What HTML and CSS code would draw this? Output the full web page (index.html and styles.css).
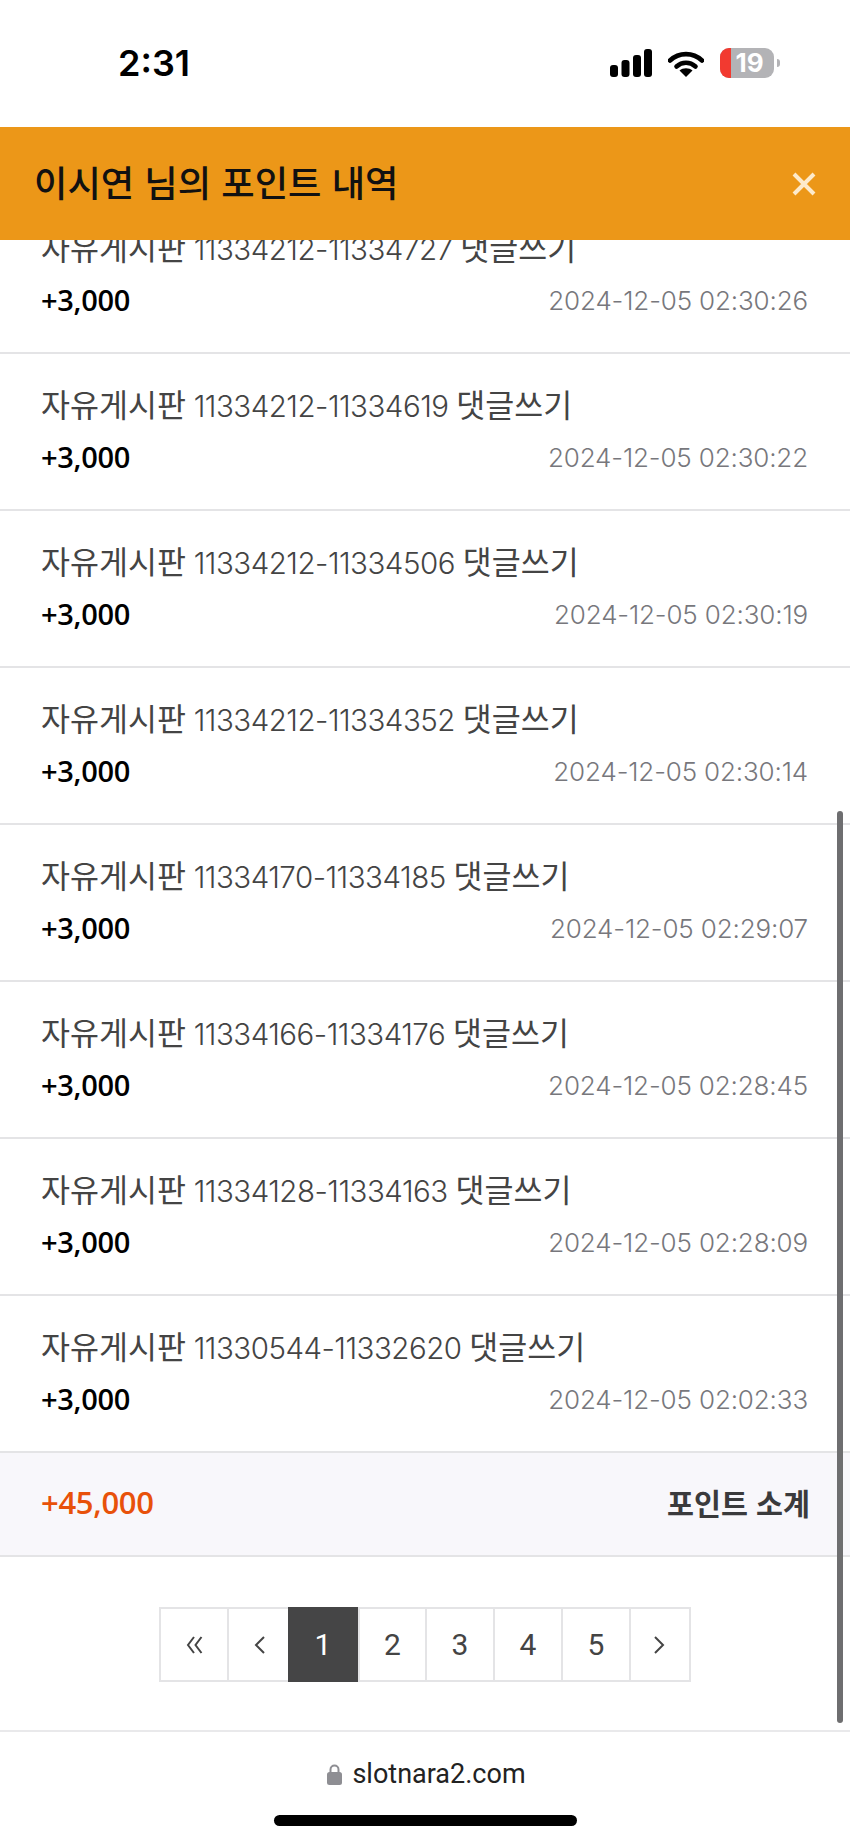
FILE: index.html
```html
<!DOCTYPE html>
<html lang="ko">

<head>
  <meta charset="UTF-8">
  <meta name="viewport" content="width=device-width, initial-scale=1.0">
  <title>포인트 내역</title>
  <link rel="stylesheet" href="styles.css">
</head>

<body>
  <div class="status-bar">
    <div class="time">2:31</div>
    <div class="status-icons">
      <svg class="signal" width="42" height="28" viewBox="0 0 42 28">
        <rect x="0" y="16" width="8" height="12" rx="3"/>
        <rect x="11.5" y="11" width="8" height="17" rx="3"/>
        <rect x="23" y="6" width="8" height="22" rx="3"/>
        <rect x="34" y="0" width="8" height="28" rx="3"/>
      </svg>
      <svg class="wifi" width="36" height="27" viewBox="0 0 36 27">
        <path d="M2 10.5C11 2 25 2 34 10.5" fill="none" stroke="#000" stroke-width="4.6" stroke-linecap="round"/>
        <path d="M8.5 16.5C14 11.5 22 11.5 27.5 16.5" fill="none" stroke="#000" stroke-width="4.6" stroke-linecap="round"/>
        <path d="M18 27L11.5 20.5C15 17.5 21 17.5 24.5 20.5Z"/>
      </svg>
      <div class="battery">
        <div class="battery-body"><span class="battery-low"></span><span class="battery-num">19</span></div>
        <span class="battery-nub"></span>
      </div>
    </div>
  </div>

  <div class="title-bar">
    <h1 class="title">이시연 님의 포인트 내역</h1>
    <svg class="close" width="26" height="26" viewBox="0 0 26 26">
      <path d="M3 3L23 23M23 3L3 23" fill="none" stroke="#fdeacb" stroke-width="4"/>
    </svg>
  </div>

  <div class="content">
    <div class="scroll-thumb"></div>
    <ul class="point-list">
      <li class="point-row">
        <div class="row-title"><span class="ko">자유게시판</span> 11334212-11334727 <span class="ko">댓글쓰기</span></div>
        <div class="row-info"><span class="amount">+3,000</span><span class="date">2024-12-05 02:30:26</span></div>
      </li>
      <li class="point-row">
        <div class="row-title"><span class="ko">자유게시판</span> 11334212-11334619 <span class="ko">댓글쓰기</span></div>
        <div class="row-info"><span class="amount">+3,000</span><span class="date">2024-12-05 02:30:22</span></div>
      </li>
      <li class="point-row">
        <div class="row-title"><span class="ko">자유게시판</span> 11334212-11334506 <span class="ko">댓글쓰기</span></div>
        <div class="row-info"><span class="amount">+3,000</span><span class="date">2024-12-05 02:30:19</span></div>
      </li>
      <li class="point-row">
        <div class="row-title"><span class="ko">자유게시판</span> 11334212-11334352 <span class="ko">댓글쓰기</span></div>
        <div class="row-info"><span class="amount">+3,000</span><span class="date">2024-12-05 02:30:14</span></div>
      </li>
      <li class="point-row">
        <div class="row-title"><span class="ko">자유게시판</span> 11334170-11334185 <span class="ko">댓글쓰기</span></div>
        <div class="row-info"><span class="amount">+3,000</span><span class="date">2024-12-05 02:29:07</span></div>
      </li>
      <li class="point-row">
        <div class="row-title"><span class="ko">자유게시판</span> 11334166-11334176 <span class="ko">댓글쓰기</span></div>
        <div class="row-info"><span class="amount">+3,000</span><span class="date">2024-12-05 02:28:45</span></div>
      </li>
      <li class="point-row">
        <div class="row-title"><span class="ko">자유게시판</span> 11334128-11334163 <span class="ko">댓글쓰기</span></div>
        <div class="row-info"><span class="amount">+3,000</span><span class="date">2024-12-05 02:28:09</span></div>
      </li>
      <li class="point-row">
        <div class="row-title"><span class="ko">자유게시판</span> 11330544-11332620 <span class="ko">댓글쓰기</span></div>
        <div class="row-info"><span class="amount">+3,000</span><span class="date">2024-12-05 02:02:33</span></div>
      </li>
    </ul>

    <div class="subtotal">
      <span class="subtotal-num">+45,000</span>
      <span class="subtotal-label">포인트 소계</span>
    </div>

    <div class="pager">
      <a class="page page-first">
        <svg width="17" height="18" viewBox="0 0 17 18"><path d="M8 1L2 9L8 17M15.500 1L9.500 9L15.500 17" fill="none" stroke="#444" stroke-width="2"/></svg>
      </a>
      <a class="page page-prev">
        <svg width="12" height="20" viewBox="0 0 12 20"><path d="M10 2L2 10L10 18" fill="none" stroke="#444" stroke-width="2"/></svg>
      </a>
      <a class="page page-on">1</a>
      <a class="page">2</a>
      <a class="page">3</a>
      <a class="page">4</a>
      <a class="page">5</a>
      <a class="page page-next">
        <svg width="12" height="20" viewBox="0 0 12 20"><path d="M2 2L10 10L2 18" fill="none" stroke="#444" stroke-width="2"/></svg>
      </a>
    </div>
  </div>

  <div class="browser-bar">
    <div class="url">
      <svg class="lock" width="15" height="21" viewBox="0 0 15 21">
        <path d="M3.500 9V5.500a4 4 0 0 1 8 0V9" fill="none" stroke="#8e8e93" stroke-width="2"/>
        <rect x="0" y="8" width="15" height="13" rx="2.500" fill="#8e8e93"/>
      </svg>
      <span>slotnara2.com</span>
    </div>
    <div class="home-bar"></div>
  </div>
</body>

</html>
```

FILE: styles.css
```css
* {
  box-sizing: border-box;
}

body {
  margin: 0;
  width: 850px;
  height: 1843px;
  overflow: hidden;
  background-color: #fff;
  font-family: 'Noto Sans CJK KR', sans-serif;
}

/* status bar */
.status-bar {
  height: 127px;
  display: flex;
  justify-content: space-between;
  padding: 48px 70px 0 118px;
}

.time {
  font-family: 'Inter', sans-serif;
  font-size: 36px;
  font-weight: 600;
  line-height: 30px;
  color: #000;
}

.status-icons {
  display: flex;
  align-items: flex-start;
  height: 30px;
}

.signal {
  margin-top: 1px;
}

.wifi {
  margin: 2px 0 0 16px;
}

.battery {
  display: flex;
  align-items: center;
  margin-left: 16px;
}

.battery-body {
  position: relative;
  width: 54px;
  height: 30px;
  border-radius: 9px;
  overflow: hidden;
  background-color: #b3b3b6;
  text-align: center;
}

.battery-low {
  position: absolute;
  left: 0;
  top: 0;
  bottom: 0;
  width: 11px;
  background-color: #f23a30;
}

.battery-num {
  position: relative;
  font-family: 'Inter', sans-serif;
  font-size: 26px;
  font-weight: 700;
  line-height: 30px;
  color: #fff;
  padding-left: 5px;
}

.battery-nub {
  width: 3px;
  height: 8px;
  margin-left: 3px;
  border-radius: 0 3px 3px 0;
  background-color: #b3b3b6;
}

/* orange title */
.title-bar {
  position: relative;
  z-index: 2;
  height: 113px;
  display: flex;
  justify-content: space-between;
  align-items: center;
  padding: 0 35px 6px 34px;
  background-color: #ec9718;
}

.title {
  margin: 0;
  font-size: 36.300px;
  font-weight: 500;
  color: #111;
}

.close {
  margin: 6px -2px 0 0;
}

/* scrolling content */
.content {
  position: relative;
  height: 1490px;
  overflow: hidden;
}

.scroll-thumb {
  position: absolute;
  right: 7px;
  top: 571px;
  width: 6px;
  height: 912px;
  border-radius: 3px;
  background-color: #6e6e70;
}

.point-list {
  list-style: none;
  margin: -43px 0 0;
  padding: 0;
}

.point-row {
  height: 157px;
  padding: 28px 42px 0 41px;
  border-bottom: 2px solid #e4e4e6;
}

.row-title {
  font-family: 'Inter', sans-serif;
  font-size: 29.500px;
  font-weight: 300;
  letter-spacing: -0.500px;
  line-height: 42px;
  color: #444;
  white-space: nowrap;
}

.ko {
  font-family: 'Noto Sans CJK KR', sans-serif;
  font-size: 31.500px;
  font-weight: 400;
  letter-spacing: 0;
}

.row-info {
  display: flex;
  justify-content: space-between;
  align-items: center;
  margin-top: 11px;
  line-height: 40px;
}

.amount {
  font-family: 'Open Sans', sans-serif;
  font-size: 29px;
  font-weight: 600;
  letter-spacing: -0.300px;
  color: #000;
  margin-top: -2px;
}

.date {
  font-family: 'Inter', sans-serif;
  font-size: 26px;
  font-weight: 300;
  letter-spacing: -0.150px;
  color: #77777c;
}

.subtotal {
  height: 104px;
  display: flex;
  justify-content: space-between;
  align-items: center;
  padding: 0 40px 5px 41px;
  background-color: #f8f7fb;
  border-bottom: 2px solid #e4e4e6;
}

.subtotal-num {
  font-family: 'Open Sans', sans-serif;
  font-size: 31px;
  font-weight: 600;
  letter-spacing: -0.300px;
  color: #e8510a;
}

.subtotal-label {
  font-size: 29.300px;
  font-weight: 700;
  color: #3a3a3c;
}

/* pagination */
.pager {
  display: flex;
  justify-content: center;
  margin-top: 50px;
}

.page {
  width: 70px;
  height: 75px;
  margin-left: -2px;
  display: flex;
  justify-content: center;
  align-items: center;
  border: 2px solid #e4e4e6;
  background-color: #fff;
  font-family: 'Roboto', sans-serif;
  font-size: 30px;
  color: #444;
}

.page-first {
  margin-left: 0;
}

.page-prev {
  width: 63px;
  padding-left: 3px;
}

.page-next {
  width: 62px;
  padding-right: 2px;
}

.page-on {
  position: relative;
  width: 70px;
  border-color: #454546;
  background-color: #454546;
  color: #fff;
}

.page-on + .page {
  width: 69px;
  margin-left: 0;
}

/* browser bar */
.browser-bar {
  position: relative;
  height: 113px;
  border-top: 2px solid #e9e9eb;
  background-color: #fff;
}

.url {
  display: flex;
  justify-content: center;
  align-items: center;
  gap: 10px;
  padding: 24px 0 0 3px;
  font-family: 'Roboto', sans-serif;
  font-size: 27px;
  line-height: 36px;
  color: #222;
}

.home-bar {
  position: absolute;
  left: 274px;
  bottom: 17px;
  width: 303px;
  height: 11px;
  border-radius: 6px;
  background-color: #000;
}
```
